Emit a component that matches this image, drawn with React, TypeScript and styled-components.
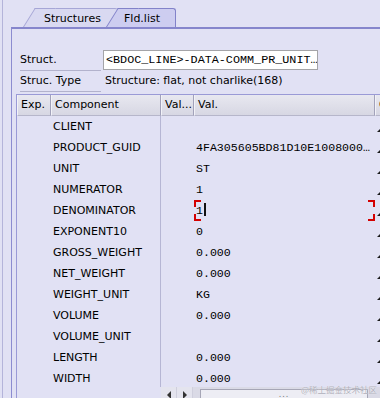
import React from "react";
import styled, { createGlobalStyle } from "styled-components";

const GlobalStyle = createGlobalStyle`
  html, body {
    margin: 0;
    padding: 0;
    background: #e1e1f4;
  }
`;

const Screen = styled.div`
  position: relative;
  width: 380px;
  height: 398px;
  overflow: hidden;
  background: #e1e1f4;
  font-family: "DejaVu Sans", Verdana, sans-serif;
  font-size: 11px;
  color: #000;
`;

const Frame = styled.div`
  margin-left: 2px;
  height: 100%;
  border-left: 1px solid #b4b4da;
  display: flex;
  flex-direction: column;
`;

const TabStrip = styled.div`
  display: flex;
  align-items: flex-end;
  height: 27px;
  padding-left: 32px;
`;

const Tab = styled.div<{ $active?: boolean; $width: number; $pad: number }>`
  position: relative;
  z-index: ${(p) => (p.$active ? 2 : 1)};
  box-sizing: border-box;
  width: ${(p) => p.$width}px;
  height: 19px;
  line-height: 19px;
  padding-left: ${(p) => p.$pad}px;
  background: ${(p) => (p.$active ? "#cdcdf0" : "#d9d9f1")};
  border-top: 1px solid ${(p) => (p.$active ? "#8282c9" : "#a6a6d6")};
  border-right: ${(p) => (p.$active ? "1px solid #8282c9" : "none")};
  border-top-right-radius: 3px;

  &::before {
    content: "";
    position: absolute;
    z-index: -1;
    left: -12px;
    top: -1px;
    bottom: 0;
    width: 20px;
    background: inherit;
    border-left: 1px solid ${(p) => (p.$active ? "#8282c9" : "#a6a6d6")};
    border-top: 1px solid ${(p) => (p.$active ? "#8282c9" : "#a6a6d6")};
    transform: skewX(-32deg);
    transform-origin: bottom left;
  }
`;

const Panel = styled.div`
  flex: 1;
  min-height: 0;
  margin-left: 8px;
  border-left: 1px solid #8c8cd0;
  border-top: 2px solid #8686cc;
  display: flex;
  flex-direction: column;
  overflow: hidden;
`;

const Form = styled.div`
  padding: 21px 0 0 8px;
  display: flex;
  flex-direction: column;
`;

const FieldRow = styled.div`
  display: flex;
  height: 21px;
`;

const Label = styled.div`
  box-sizing: border-box;
  width: 81px;
  line-height: 20px;
  border-bottom: 1px solid #b2b2cc;
  white-space: nowrap;
`;

const Input = styled.div`
  box-sizing: border-box;
  margin-left: 2px;
  width: 215px;
  height: 20px;
  padding-left: 2px;
  line-height: 18px;
  background: #fff;
  border: 1px solid #a4a4a8;
  font-family: "Liberation Mono", "Courier New", monospace;
  font-size: 11.75px;
  white-space: nowrap;
  overflow: hidden;
`;

const Value = styled.div`
  margin-left: 4px;
  line-height: 20px;
  white-space: nowrap;
`;

const Table = styled.div`
  margin: 2px 0 0 4px;
  flex: 1;
  min-height: 0;
  border-left: 1px solid #9a9ad6;
  border-top: 1px solid #9a9ad6;
  display: flex;
  flex-direction: column;
`;

const COLS = "34px 110px 33px 181px 60px";

const HeadRow = styled.div`
  display: grid;
  grid-template-columns: ${COLS};
  height: 21px;
`;

const HeadCell = styled.div`
  box-sizing: border-box;
  padding-left: 3px;
  line-height: 19px;
  white-space: nowrap;
  overflow: hidden;
  background: linear-gradient(#e8e8f0, #d7d7e3);
  border-right: 1px solid #a2a2ba;
  border-bottom: 1px solid #b6b6ca;
  border-left: 1px solid #f2f2f8;
`;

const Body = styled.div`
  height: 271px;
  overflow: hidden;
`;

const Row = styled.div`
  display: grid;
  grid-template-columns: ${COLS};
  height: 21px;
`;

const Cell = styled.div<{ $mono?: boolean; $divider?: boolean }>`
  position: relative;
  box-sizing: border-box;
  padding-left: 2px;
  line-height: 21px;
  white-space: nowrap;
  overflow: hidden;
  font-family: ${(p) =>
    p.$mono ? '"Liberation Mono", "Courier New", monospace' : "inherit"};
  font-size: ${(p) => (p.$mono ? "11.6px" : "11px")};
  border-right: ${(p) => (p.$divider ? "1px solid #b6b6d4" : "none")};
`;

const MarkCell = styled.div`
  display: flex;
  align-items: center;
  padding-left: 2px;
`;

const Marker = styled.span`
  width: 0;
  height: 0;
  margin-top: 7px;
  border-left: 4px solid transparent;
  border-bottom: 4px solid #1c1c1c;
`;

const Caret = styled.span`
  display: inline-block;
  width: 2px;
  height: 13px;
  margin-left: 1px;
  vertical-align: -2px;
  background: #111;
`;

const Corner = styled.span<{ $top?: boolean; $left?: boolean }>`
  position: absolute;
  width: 5px;
  height: 5px;
  ${(p) => (p.$top ? "top: 0;" : "bottom: 0;")}
  ${(p) => (p.$left ? "left: 0;" : "right: 0;")}
  border-color: #d40000;
  border-style: solid;
  border-width: ${(p) =>
    `${p.$top ? 2 : 0}px ${p.$left ? 0 : 2}px ${p.$top ? 0 : 2}px ${
      p.$left ? 2 : 0
    }px`};
`;

const ScrollRow = styled.div`
  display: flex;
  height: 11px;
`;

const ScrollSpacer = styled.div`
  width: 144px;
`;

const ScrollBar = styled.div`
  flex: 1;
  display: flex;
  background: #dadae6;
`;

const ArrowButton = styled.div<{ $dir: "left" | "right" }>`
  width: 16px;
  display: flex;
  justify-content: center;
  padding-top: 4px;
  box-sizing: border-box;
  background: #e4e4ee;
  border-right: 1px solid #cfcfdd;

  &::after {
    content: "";
    width: 0;
    height: 0;
    border-top: 4px solid transparent;
    border-bottom: 4px solid transparent;
    ${(p) =>
      p.$dir === "left"
        ? "border-right: 4px solid #333;"
        : "border-left: 4px solid #333;"}
  }
`;

const Slider = styled.div`
  box-sizing: border-box;
  width: 168px;
  margin: 2px 0 0 7px;
  border: 1px solid #a6a6b6;
  border-bottom: none;
  background: #ededf4;
  text-align: center;
  font-size: 8px;
  line-height: 10px;
  color: #777;
  letter-spacing: 1px;
`;

const Watermark = styled.div`
  position: absolute;
  right: 3px;
  bottom: 3px;
  font-family: "Noto Sans CJK SC", sans-serif;
  font-size: 8.5px;
  color: #aeaeba;
  text-shadow: 0 0 1px #fff;
`;

type Field = { name: string; value: string; focus?: boolean };

const fields: Field[] = [
  { name: "CLIENT", value: "" },
  { name: "PRODUCT_GUID", value: "4FA305605BD81D10E1008000…" },
  { name: "UNIT", value: "ST" },
  { name: "NUMERATOR", value: "1" },
  { name: "DENOMINATOR", value: "1", focus: true },
  { name: "EXPONENT10", value: "0" },
  { name: "GROSS_WEIGHT", value: "0.000" },
  { name: "NET_WEIGHT", value: "0.000" },
  { name: "WEIGHT_UNIT", value: "KG" },
  { name: "VOLUME", value: "0.000" },
  { name: "VOLUME_UNIT", value: "" },
  { name: "LENGTH", value: "0.000" },
  { name: "WIDTH", value: "0.000" },
];

const App = () => {
  return (
    <Screen>
      <GlobalStyle />
      <Frame>
        <TabStrip>
          <Tab $width={83} $pad={9}>
            Structures
          </Tab>
          <Tab $active $width={58} $pad={6}>
            Fld.list
          </Tab>
        </TabStrip>
        <Panel>
          <Form>
            <FieldRow>
              <Label>Struct.</Label>
              <Input>&lt;BDOC_LINE&gt;-DATA-COMM_PR_UNIT…</Input>
            </FieldRow>
            <FieldRow>
              <Label>Struc. Type</Label>
              <Value>Structure: flat, not charlike(168)</Value>
            </FieldRow>
          </Form>
          <Table>
            <HeadRow>
              <HeadCell>Exp.</HeadCell>
              <HeadCell>Component</HeadCell>
              <HeadCell>Val...</HeadCell>
              <HeadCell>Val.</HeadCell>
              <HeadCell>C</HeadCell>
            </HeadRow>
            <Body>
              {fields.map((f) => (
                <Row key={f.name}>
                  <Cell />
                  <Cell $divider>{f.name}</Cell>
                  <Cell />
                  <Cell $mono>
                    {f.value}
                    {f.focus && (
                      <>
                        <Caret />
                        <Corner $top $left />
                        <Corner $top />
                        <Corner $left />
                        <Corner />
                      </>
                    )}
                  </Cell>
                  <MarkCell>
                    <Marker />
                  </MarkCell>
                </Row>
              ))}
            </Body>
            <ScrollRow>
              <ScrollSpacer />
              <ScrollBar>
                <ArrowButton $dir="left" />
                <ArrowButton $dir="right" />
                <Slider>...</Slider>
              </ScrollBar>
            </ScrollRow>
          </Table>
        </Panel>
      </Frame>
      <Watermark>@稀土掘金技术社区</Watermark>
    </Screen>
  );
};

export default App;
